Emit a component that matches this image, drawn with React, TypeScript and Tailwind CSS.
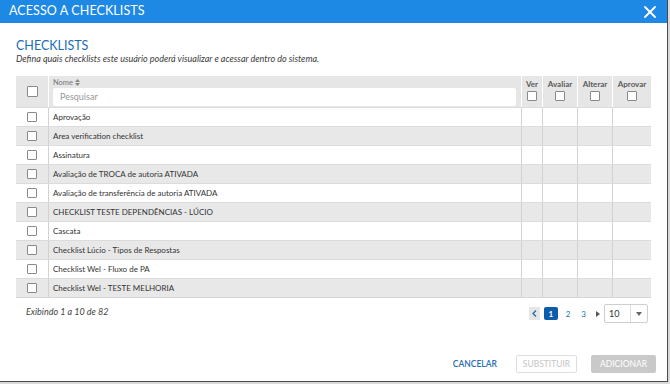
const ROWS = [
  "Aprovação",
  "Area verification checklist",
  "Assinatura",
  "Avaliação de TROCA de autoria ATIVADA",
  "Avaliação de transferência de autoria ATIVADA",
  "CHECKLIST TESTE DEPENDÊNCIAS - LÚCIO",
  "Cascata",
  "Checklist Lúcio - Tipos de Respostas",
  "Checklist Wel - Fluxo de PA",
  "Checklist Wel - TESTE MELHORIA",
];

const PERMS = ["Ver", "Avaliar", "Alterar", "Aprovar"];

const COLS = "grid grid-cols-[33px_473px_21px_35px_35px_38px]";

function Box({ big = false }: { big?: boolean }) {
  return (
    <span
      className={`block bg-white border border-[#8a8a8a] rounded-[1px] ${big ? "w-[11px] h-[11px]" : "w-[10px] h-[10px]"}`}
    />
  );
}

export default function App() {
  return (
    <div className="w-[670px] h-[384px] bg-[#d9d9d9] font-[family-name:Lato,sans-serif] overflow-hidden">
      <div className="w-[668px] h-[382px] bg-white border-r border-b border-[#4a4a4a] flex flex-col">
        {/* Title bar */}
        <div className="h-[23px] bg-[#1e88e5] flex items-center justify-between pl-[9px] pr-[11px] shrink-0">
          <span className="text-white text-[12.5px] leading-none tracking-[0.1px]">ACESSO A CHECKLISTS</span>
          <svg width="12" height="12" viewBox="0 0 12 12" className="text-white">
            <path d="M1 1L11 11M11 1L1 11" stroke="currentColor" strokeWidth="1.8" strokeLinecap="round" />
          </svg>
        </div>

        <div className="flex-1 flex flex-col pl-[16px] pr-[16px] pt-[15px]">
          <h1 className="text-[12.5px] leading-[15px] text-[#1a6db5]">CHECKLISTS</h1>
          <p className="text-[9px] leading-[11px] italic text-[#3c3c3c]">
            Defina quais checklists este usuário poderá visualizar e acessar dentro do sistema.
          </p>

          {/* Table */}
          <div className="mt-[12px] border-b border-[#d6d6d6]">
            <div className={`${COLS} h-[31px] bg-[#e6e6e6]`}>
              <div className="flex items-center justify-center border-r border-white">
                <Box big />
              </div>
              <div className="flex flex-col justify-center pl-[4px] pr-[5px] border-r border-white">
                <span className="text-[7.5px] leading-[10px] text-[#777] flex items-center gap-[2px]">
                  Nome
                  <svg width="5" height="7" viewBox="0 0 5 7">
                    <path d="M2.5 0L5 3H0Z M2.5 7L5 4H0Z" fill="#888" />
                  </svg>
                </span>
                <div className="h-[18px] bg-white rounded-[2px] flex items-center pl-[7px] text-[9px] text-[#999]">
                  Pesquisar
                </div>
              </div>
              {PERMS.map((p, i) => (
                <div
                  key={p}
                  className={`flex flex-col items-center pt-[3px] gap-[2px] ${i < 3 ? "border-r border-white" : ""}`}
                >
                  <span className="text-[8px] leading-[10px] text-[#5a5a5a] font-bold">{p}</span>
                  <Box />
                </div>
              ))}
            </div>

            {ROWS.map((name, i) => (
              <div
                key={name}
                className={`${COLS} h-[19px] border-t border-[#dcdcdc] ${i % 2 ? "bg-[#e8e8e8]" : "bg-white"}`}
              >
                <div className="flex items-center justify-center border-r border-[#d2d2d2]">
                  <Box />
                </div>
                <div className="flex items-center pl-[4px] text-[8px] text-[#333] border-r border-[#d2d2d2]">
                  {name}
                </div>
                <div className="border-r border-[#d2d2d2]" />
                <div className="border-r border-[#d2d2d2]" />
                <div className="border-r border-[#d2d2d2]" />
                <div />
              </div>
            ))}
          </div>

          {/* Footer of table */}
          <div className="flex items-center justify-between mt-[6px] h-[19px]">
            <span className="pl-[10px] -mt-[4px] text-[9px] italic text-[#444]">Exibindo 1 a 10 de 82</span>
            <div className="flex items-center mr-[3px]">
              <span className="w-[11px] h-[13px] bg-[#e6e6e6] flex items-center justify-center">
                <svg width="5" height="7" viewBox="0 0 5 7">
                  <path d="M4 0.5L1 3.5L4 6.5" stroke="#2a6db0" strokeWidth="1.4" fill="none" />
                </svg>
              </span>
              <span className="ml-[4px] w-[14px] h-[13px] bg-[#0b5cab] rounded-[2px] text-white text-[8px] font-bold flex items-center justify-center">
                1
              </span>
              <span className="ml-[8px] text-[8px] text-[#2a6db0]">2</span>
              <span className="ml-[11px] text-[8px] text-[#2a6db0]">3</span>
              <svg width="4" height="6" viewBox="0 0 4 6" className="ml-[10px]">
                <path d="M0 0L4 3L0 6Z" fill="#555" />
              </svg>
              <div className="ml-[4px] w-[44px] h-[19px] border border-[#cfcfcf] rounded-[2px] flex">
                <span className="flex-1 pl-[4px] text-[9px] text-[#333] flex items-center border-r border-[#dcdcdc]">10</span>
                <span className="w-[16px] flex items-center justify-center">
                  <svg width="6" height="4" viewBox="0 0 6 4">
                    <path d="M0 0H6L3 4Z" fill="#666" />
                  </svg>
                </span>
              </div>
            </div>
          </div>

          {/* Buttons */}
          <div className="mt-auto mb-[8px] -mr-[5px] flex items-center justify-end">
            <button className="text-[8.5px] font-semibold text-[#2a6db0] leading-none">CANCELAR</button>
            <button className="ml-[19px] w-[61px] h-[18px] border border-[#dedede] rounded-[2px] text-[8.5px] text-[#c4c4c4] leading-none">
              SUBSTITUIR
            </button>
            <button className="ml-[14px] w-[65px] h-[18px] bg-[#c9c9c9] rounded-[2px] text-[8.5px] text-white leading-none">
              ADICIONAR
            </button>
          </div>
        </div>
      </div>
    </div>
  );
}
